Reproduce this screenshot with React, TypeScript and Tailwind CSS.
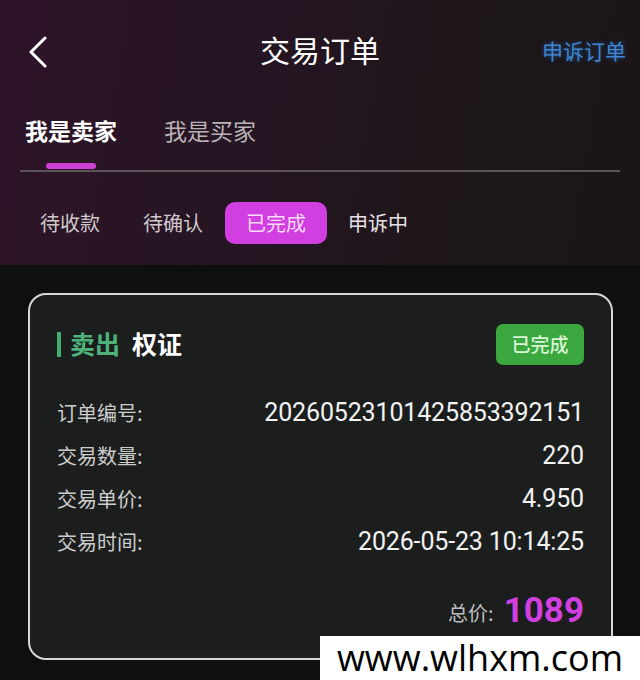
import React from "react";

const cjk = { fontFamily: '"Noto Sans CJK SC", "Noto Sans", sans-serif' };
const num = { fontFamily: 'Roboto, "Noto Sans CJK SC", sans-serif' };

function Row({ label, value }: { label: string; value: string }) {
  return (
    <div className="flex h-[43px] items-center justify-between">
      <span className="text-[20px] text-[#cdcdcd]" style={cjk}>
        {label}
      </span>
      <span className="text-[25px] tracking-[-0.15px] text-[#f2f2f2]" style={num}>
        {value}
      </span>
    </div>
  );
}

export default function App() {
  return (
    <div className="relative h-[680px] w-[640px] overflow-hidden bg-[#0e0f0f]" style={cjk}>
      {/* header */}
      <div className="h-[265px] bg-[linear-gradient(100deg,#2e1429_0%,#251522_40%,#1c1619_75%,#1c1518_100%)]">
        {/* nav */}
        <div className="relative flex h-[100px] items-center justify-center">
          <svg
            className="absolute left-[27px] top-[36px]"
            width="22"
            height="32"
            viewBox="0 0 22 32"
            fill="none"
            stroke="#ffffff"
            strokeWidth="3"
            strokeLinecap="round"
            strokeLinejoin="round"
          >
            <path d="M18 2 L4 16 L18 30" />
          </svg>
          <span className="-mt-[2px] text-[30px] text-white">交易订单</span>
          <span className="absolute right-[14px] top-[37px] text-[21px] leading-[26px] text-[#3f86cf] [text-shadow:0_0_4px_#1e4f8a]">
            申诉订单
          </span>
        </div>
        {/* role tabs */}
        <div className="mx-[20px]">
          <div className="flex h-[70px] items-end gap-[47px] px-[5px] pb-[24px]">
            <span className="text-[23px] font-bold leading-[32px] text-white">我是卖家</span>
            <span className="text-[23px] leading-[32px] text-[#b9b3b7]">我是买家</span>
          </div>
          <div className="relative h-[2px] bg-[#5a5458]">
            <div className="absolute left-[26px] top-[-7px] h-[6px] w-[50px] rounded-full bg-[#cf3fd8]" />
          </div>
        </div>
        {/* status tabs */}
        <div className="flex h-[74px] items-center pl-[40px] pt-[28px]">
          <span className="text-[20px] text-[#cfc9cc]">待收款</span>
          <span className="ml-[43px] text-[20px] text-[#cfc9cc]">待确认</span>
          <span className="ml-[22px] flex h-[42px] w-[102px] items-center justify-center rounded-[10px] bg-[#d23fe0] text-[20px] text-[#fbd9fb]">
            已完成
          </span>
          <span className="ml-[21px] text-[20px] text-[#e6e1e4]">申诉中</span>
        </div>
      </div>

      {/* card */}
      <div className="mx-[28px] mt-[28px] h-[367px] w-[585px] rounded-[18px] border-2 border-[#d6d8d6] bg-[#1c1d1d] px-[27px] pt-[28px]">
        <div className="flex h-[42px] items-center justify-between">
          <div className="flex items-center">
            <div className="h-[25px] w-[4px] bg-[#3fae6f]" />
            <span className="ml-[9px] text-[25px] font-bold text-[#4db37a]">卖出</span>
            <span className="ml-[12px] text-[25px] font-bold text-white">权证</span>
          </div>
          <span className="flex h-[41px] w-[88px] items-center justify-center rounded-[7px] bg-[#3aa83e] text-[19px] font-medium text-[#d8f5d4]">
            已完成
          </span>
        </div>
        <div className="mt-[26px]">
          <Row label="订单编号:" value="20260523101425853392151" />
          <Row label="交易数量:" value="220" />
          <Row label="交易单价:" value="4.950" />
          <Row label="交易时间:" value="2026-05-23 10:14:25" />
        </div>
        <div className="mt-[28px] flex items-center justify-end">
          <span className="mt-[4px] text-[20px] text-[#bdbdbd]">总价:</span>
          <span className="ml-[10px] text-[35px] font-bold leading-[40px] text-[#d23fe0]" style={num}>
            1089
          </span>
        </div>
      </div>

      {/* watermark */}
      <div className="absolute bottom-0 right-0 flex h-[44px] w-[320px] items-center justify-center bg-white">
        <span className="text-[36px] leading-none text-black" style={{ fontFamily: '"Open Sans", sans-serif' }}>
          www.wlhxm.com
        </span>
      </div>
    </div>
  );
}
